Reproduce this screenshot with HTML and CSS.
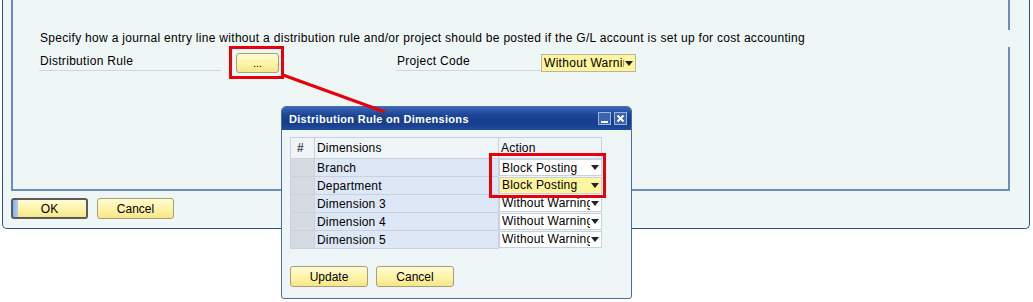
FILE: index.html
```html
<!DOCTYPE html>
<html lang="en">
<head>
  <meta charset="utf-8">
  <title>G/L Account Determination</title>
  <link rel="stylesheet" href="styles.css">
</head>
<body>

  <div class="window">
    <div class="frame">
      <p class="hint">Specify how a journal entry line without a distribution rule and/or project should be posted if the G/L account is set up for cost accounting</p>
      <div class="row">
        <span class="label labelDist">Distribution Rule</span>
        <span class="marked"><button class="btn btnDots">...</button></span>
        <span class="label labelProj">Project Code</span>
        <div class="combo comboYellow"><span class="comboText">Without Warning</span><span class="arrow"></span></div>
      </div>
    </div>
    <div class="actions">
      <button class="btn btnMain btnDefault">OK</button>
      <button class="btn btnMain">Cancel</button>
    </div>
  </div>

  <!-- callout line from the "..." button to the popup -->
  <svg class="pointer" width="1033" height="302">
    <line x1="283" y1="75" x2="385" y2="112" stroke="#e8000b" stroke-width="3"/>
  </svg>

  <div class="dialog">
    <div class="titleBar">
      <span class="titleText">Distribution Rule on Dimensions</span>
      <span class="titleBtns">
        <span class="tbtn"><svg width="11" height="11"><rect x="2" y="8" width="7" height="2" fill="#fff"/></svg></span>
        <span class="tbtn"><svg width="11" height="11"><path d="M2.5 2.5 L8.5 8.5 M8.5 2.5 L2.5 8.5" stroke="#fff" stroke-width="2"/></svg></span>
      </span>
    </div>
    <div class="dialogBody">
      <table class="grid">
        <tr class="head">
          <th class="colNum">#</th>
          <th class="colDim">Dimensions</th>
          <th class="colAct">Action</th>
        </tr>
        <tr>
          <td class="rowNum"></td>
          <td class="dim">Branch</td>
          <td class="act"><span class="comboText">Block Posting</span><span class="arrow"></span></td>
        </tr>
        <tr>
          <td class="rowNum"></td>
          <td class="dim">Department</td>
          <td class="act actFocus"><span class="comboText">Block Posting</span><span class="arrow"></span></td>
        </tr>
        <tr>
          <td class="rowNum"></td>
          <td class="dim">Dimension 3</td>
          <td class="act"><span class="comboText">Without Warning</span><span class="arrow"></span></td>
        </tr>
        <tr>
          <td class="rowNum"></td>
          <td class="dim">Dimension 4</td>
          <td class="act"><span class="comboText">Without Warning</span><span class="arrow"></span></td>
        </tr>
        <tr>
          <td class="rowNum"></td>
          <td class="dim">Dimension 5</td>
          <td class="act"><span class="comboText">Without Warning</span><span class="arrow"></span></td>
        </tr>
      </table>
      <div class="dialogActions">
        <button class="btn btnDlg">Update</button>
        <button class="btn btnDlg">Cancel</button>
      </div>
    </div>
    <div class="highlight"></div>
  </div>

</body>
</html>
```

FILE: styles.css
```css
html, body {
  margin: 0;
  padding: 0;
  background: #ffffff;
  font-family: "Liberation Sans", Arial, sans-serif;
  font-size: 12px;
  color: #000;
}

body {
  position: relative;
  width: 1033px;
  height: 302px;
  overflow: hidden;
}

.window {
  box-sizing: border-box;
  margin-left: 2px;
  width: 1028px;
  height: 229px;
  padding-left: 8px;
  background: #eef6f6;
  border: 1px solid #2e4f88;
  border-top: none;
  border-radius: 0 0 5px 5px;
}

.frame {
  position: relative;
  box-sizing: border-box;
  width: 999px;
  height: 191px;
  padding: 32px 0 0 26px;
  border: 2px solid #6b8dbf;
  border-top: none;
  letter-spacing: 0.3px;
}

/* small break in the right edge of the frame */
.frame::after {
  content: "";
  position: absolute;
  right: -2px;
  top: 30px;
  width: 2px;
  height: 17px;
  background: #eef6f6;
}

.hint {
  margin: 0;
  padding-left: 1px;
  line-height: 13px;
}

.row {
  display: flex;
  align-items: flex-start;
  margin-top: 8px;
  height: 20px;
}

.label {
  box-sizing: border-box;
  height: 18px;
  line-height: 17px;
  padding-left: 1px;
  border-bottom: 1px solid #cdd7de;
}

.labelDist {
  width: 182px;
}

.labelProj {
  width: 145px;
  margin-left: 112px;
}

.btn {
  box-sizing: border-box;
  font-family: "Liberation Sans", Arial, sans-serif;
  font-size: 12px;
  color: #000;
  padding: 0;
  border: 1px solid #a6a07a;
  border-radius: 3px;
  background: linear-gradient(#fffbd2, #fdf2a4 60%, #f6e687);
}

/* red marker drawn around the "..." button */
.marked {
  display: flex;
  margin: -7px 0 0 8px;
  padding: 4px 2px 3px 4px;
  border: 3px solid #e8000b;
}

.btnDots {
  width: 43px;
  height: 20px;
  line-height: 16px;
  font-size: 11px;
}

.combo {
  box-sizing: border-box;
  display: flex;
  align-items: center;
  width: 95px;
  height: 18px;
  margin-top: 1px;
  padding-left: 2px;
  border: 1px solid #b8b6a2;
}

.comboYellow {
  background: #fff59e;
}

.comboText {
  flex: 1;
  overflow: hidden;
  white-space: nowrap;
}

.arrow {
  width: 0;
  height: 0;
  margin: 0 2px 0 1px;
  border-left: 4px solid transparent;
  border-right: 4px solid transparent;
  border-top: 5px solid #222;
}

.actions {
  display: flex;
  gap: 9px;
  margin-top: 7px;
}

.btnMain {
  width: 77px;
  height: 21px;
}

.btnDefault {
  border: 2px solid #5a5a5a;
  background: linear-gradient(to right, #8fb0e6 0, #b3cbf2 5px, transparent 5px),
              linear-gradient(#fffbd2, #fdf2a4 60%, #f6e687);
}

.pointer {
  position: absolute;
  left: 0;
  top: 0;
  z-index: 2;
  pointer-events: none;
}

.dialog {
  position: absolute;
  left: 281px;
  top: 106px;
  box-sizing: border-box;
  width: 351px;
  height: 193px;
  background: #eef5f7;
  border: 1px solid #4e6ca3;
  border-radius: 5px 5px 3px 3px;
  z-index: 1;
}

.titleBar {
  display: flex;
  align-items: center;
  justify-content: space-between;
  height: 23px;
  padding: 0 4px 0 7px;
  border-radius: 4px 4px 0 0;
  background: linear-gradient(#3a67b8, #1c4595 35%, #173d8c 70%, #214c9d);
}

.titleText {
  color: #fff;
  font-weight: bold;
  font-size: 11px;
  letter-spacing: 0.3px;
}

.titleBtns {
  display: flex;
  gap: 3px;
}

.tbtn {
  display: flex;
  align-items: center;
  justify-content: center;
  box-sizing: border-box;
  width: 13px;
  height: 13px;
  border: 1px solid #9db4de;
  background: #3c63ad;
}

.dialogBody {
  padding: 7px 0 0 8px;
}

.grid {
  border-collapse: collapse;
  width: 312px;
  table-layout: fixed;
  letter-spacing: 0.2px;
}

.grid th, .grid td {
  height: 17px;
  padding: 0 0 0 2px;
  border: 1px solid #c6d2de;
  text-align: left;
  font-weight: normal;
  white-space: nowrap;
  overflow: hidden;
}

.grid .head th {
  height: 20px;
  background: #eef4f8;
}

.grid .colNum {
  width: 17px;
  padding-left: 6px;
}

.grid .colDim {
  width: 181px;
}

.rowNum {
  background: #d6dbe2;
  border-color: #eef2f6 #c6d2de;
}

.dim {
  background: #dde7f6;
}

.act {
  display: flex;
  align-items: center;
  background: #fff;
  box-sizing: border-box;
}

.actFocus {
  background: #fff59e;
}

.dialogActions {
  display: flex;
  gap: 8px;
  margin-top: 17px;
}

.btnDlg {
  width: 78px;
  height: 21px;
}

.highlight {
  position: absolute;
  left: 207px;
  top: 46px;
  width: 111px;
  height: 39px;
  border: 3px solid #e8000b;
}
```
